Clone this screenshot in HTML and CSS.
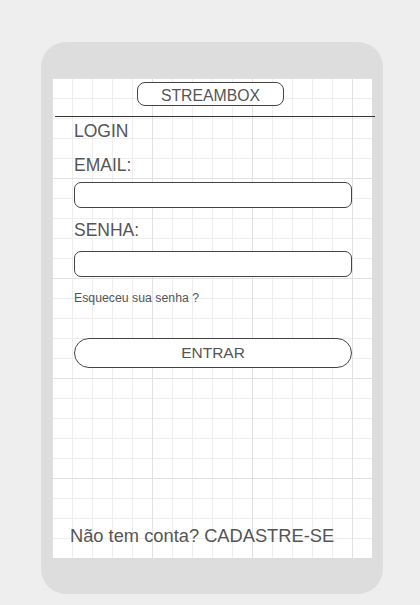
FILE: index.html
```html
<!DOCTYPE html>
<html lang="pt">
<head>
<meta charset="utf-8">
<title>Streambox - Login</title>
<link rel="stylesheet" href="styles.css">
</head>
<body>
  <div class="phone">
    <div class="screen">
      <div class="brand">STREAMBOX</div>
      <div class="rule"></div>
      <div class="form">
        <div class="title">LOGIN</div>
        <div class="label label-email">EMAIL:</div>
        <div class="input"></div>
        <div class="label label-pass">SENHA:</div>
        <div class="input"></div>
        <div class="forgot">Esqueceu sua senha ?</div>
        <div class="button">ENTRAR</div>
      </div>
      <div class="signup">Não tem conta? CADASTRE-SE</div>
    </div>
  </div>
</body>
</html>
```

FILE: styles.css
```css
html, body {
  margin: 0;
  padding: 0;
}
body {
  background: #eeeeee;
  font-family: "Liberation Sans", Arial, sans-serif;
  color: #555555;
  width: 420px;
  height: 605px;
  overflow: hidden;
}
.phone {
  box-sizing: border-box;
  margin: 42px 0 0 41px;
  width: 342px;
  height: 552px;
  padding: 36px 11px;
  background: #dddddd;
  border-radius: 25px;
}
.screen {
  width: 320px;
  height: 480px;
  display: flex;
  flex-direction: column;
  background-color: #ffffff;
  background-image:
    linear-gradient(to right, #e1e1e1 1px, transparent 1px),
    linear-gradient(to bottom, #e1e1e1 1px, transparent 1px),
    linear-gradient(to right, #ededed 1px, transparent 1px),
    linear-gradient(to bottom, #ededed 1px, transparent 1px);
  background-size: 100px 100px, 100px 100px, 20px 20px, 20px 20px;
}
.brand {
  box-sizing: border-box;
  margin: 4px 0 0 85px;
  width: 147px;
  height: 24px;
  padding-top: 3px;
  border: 1px solid #444444;
  border-radius: 8px;
  background: #ffffff;
  font-size: 15.8px;
  line-height: 19px;
  text-align: center;
}
.rule {
  margin: 10px 0 0 3px;
  width: 320px;
  height: 1px;
  background: #333333;
}
.form {
  display: flex;
  flex-direction: column;
  padding: 0 20px 0 22px;
}
.title {
  margin-top: 4px;
  font-size: 17.5px;
  line-height: 20px;
}
.label {
  font-size: 17.5px;
  line-height: 20px;
}
.label-email {
  margin-top: 14px;
}
.label-pass {
  margin-top: 12px;
}
.input {
  box-sizing: border-box;
  height: 26px;
  margin-top: 7px;
  border: 1px solid #444444;
  border-radius: 7px;
  background: #ffffff;
}
.label-pass + .input {
  margin-top: 11px;
}
.forgot {
  margin-top: 14px;
  font-size: 12.3px;
  line-height: 14px;
}
.button {
  box-sizing: border-box;
  height: 30px;
  margin-top: 33px;
  border: 1px solid #444444;
  border-radius: 15px;
  background: #ffffff;
  font-size: 15.5px;
  line-height: 28px;
  text-align: center;
}
.signup {
  margin: auto 0 0 18px;
  padding-bottom: 11px;
  font-size: 18.3px;
  line-height: 22px;
}
```
